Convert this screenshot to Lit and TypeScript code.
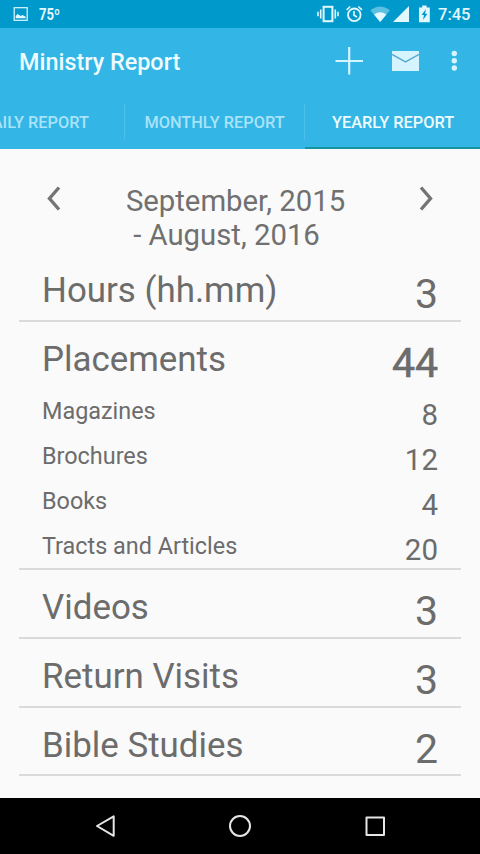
import { LitElement, html, css, svg } from "lit";
import { customElement } from "lit/decorators.js";

interface Section {
  label: string;
  value: string;
  strong?: boolean;
  items?: [string, string][];
}

const SECTIONS: Section[] = [
  { label: "Hours (hh.mm)", value: "3" },
  {
    label: "Placements",
    value: "44",
    strong: true,
    items: [
      ["Magazines", "8"],
      ["Brochures", "12"],
      ["Books", "4"],
      ["Tracts and Articles", "20"],
    ],
  },
  { label: "Videos", value: "3" },
  { label: "Return Visits", value: "3" },
  { label: "Bible Studies", value: "2" },
];

@customElement("status-bar")
export class StatusBar extends LitElement {
  static styles = css`
    :host {
      display: flex;
      align-items: center;
      height: 28px;
      background: #0099cb;
      color: #e2f8ff;
      font-weight: 500;
    }
    .photo { width: 16px; height: 16px; margin-left: 13px; }
    .temp {
      margin-left: 10px;
      font: 700 16px/28px Roboto, sans-serif;
      transform: scaleX(0.82);
      transform-origin: left;
      padding-top: 2px;
    }
    .icons { width: 122px; height: 28px; margin-left: auto; }
    .clock { width: 42px; font-size: 16.5px; line-height: 30px; padding-top: 1px; }
  `;
  render() {
    return html`
      <svg class="photo" viewBox="0 0 16 16">
        <rect x="1.2" y="1.7" width="13" height="12.6" fill="none" stroke="currentColor" stroke-width="1.2" />
        <path d="M2.7 12.3V10l2-2 3 2 1.8-1 3.2 1.8v1.5z" fill="currentColor" />
      </svg>
      <span class="temp">75º</span>
      <svg class="icons" viewBox="316 0 122 28">
        <g fill="none" stroke="currentColor">
          <rect x="323.6" y="6.8" width="8.8" height="14.4" stroke-width="2" />
          <path d="M320.7 9.5v9M318 11.7v4.6M335.3 9.5v9M338 11.7v4.6" stroke-width="1.6" />
          <circle cx="354.3" cy="14.8" r="6.3" stroke-width="1.8" />
          <path d="M354 11v4.2l3 1.8M346.6 9.8l3.7-3.3M358.3 6.500l3.700 3.300" stroke-width="1.600" />
        </g>
        <path d="M370.300 10.200Q380.200 2.600 390 10.200L380.200 22z" fill="currentColor" opacity=".4" />
        <path d="M374 14.500Q380.200 9.800 386.400 14.500L380.200 22z" fill="currentColor" />
        <path d="M409 6v16h-16z" fill="currentColor" />
        <path d="M419 7.4h3.2V5.6h4.4v1.8h3.2V22.2H419z" fill="currentColor" />
        <path d="M426 9l-4.500 6h2.500l-1 5 4.500-6.300h-2.500z" fill="#0099cb" />
      </svg>
      <span class="clock">7:45</span>
    `;
  }
}

@customElement("action-bar")
export class ActionBar extends LitElement {
  static styles = css`
    :host {
      display: flex;
      align-items: center;
      height: 67px;
      padding-left: 19px;
      color: #effcff;
    }
    .title { flex: 1; font-size: 23.4px; font-weight: 500; line-height: 67px; padding-top: 1px; white-space: nowrap; }
    .actions { width: 150px; height: 67px; color: #d6f4ff; }
  `;
  render() {
    return html`
      <span class="title">Ministry Report</span>
      <svg class="actions" viewBox="330 28 150 67">
        <path d="M335.5 61h27.5M349.2 47v27.5" stroke="currentColor" stroke-width="2.2" />
        <rect x="392" y="51" width="27" height="20" fill="currentColor" />
        <path d="M392 54.3l13.5 7.7 13.5-7.7" fill="none" stroke="#58acce" stroke-width="1.5" />
        <g fill="currentColor">
          <circle cx="454.3" cy="53.5" r="2.7" />
          <circle cx="454.3" cy="60.8" r="2.7" />
          <circle cx="454.3" cy="68" r="2.7" />
        </g>
      </svg>
    `;
  }
}

@customElement("tab-strip")
export class TabStrip extends LitElement {
  static styles = css`
    :host {
      display: flex;
      height: 54px;
      overflow: hidden;
      font-size: 16.35px;
      font-weight: 500;
      line-height: 55px;
      color: #a9e3fa;
      white-space: nowrap;
    }
    .tab { box-sizing: border-box; height: 54px; flex: none; }
    .daily { width: 124px; display: flex; justify-content: flex-end; padding-right: 35px; }
    .monthly { width: 179px; text-align: center; }
    .yearly { width: 175px; padding-left: 27px; color: #effcff; border-bottom: 2px solid #1593a0; }
    .rule { width: 1px; height: 36px; margin-top: 9px; background: #4cc0ea; flex: none; }
  `;
  render() {
    return html`
      <span class="tab daily">DAILY REPORT</span>
      <i class="rule"></i>
      <span class="tab monthly">MONTHLY REPORT</span>
      <i class="rule"></i>
      <span class="tab yearly">YEARLY REPORT</span>
    `;
  }
}

@customElement("period-picker")
export class PeriodPicker extends LitElement {
  static styles = css`
    :host {
      display: flex;
      justify-content: space-between;
      height: 104px;
      padding: 0 46px;
      color: #707070;
    }
    .arrow { width: 16px; height: 28px; margin-top: 35px; }
    .range { text-align: center; font-size: 29.3px; line-height: 34.5px; margin: 34.5px 9px 0 0; white-space: pre; }
    .end { display: block; padding-right: 18px; }
  `;
  render() {
    const arrow = (d: string) => html`<svg class="arrow" viewBox="0 0 16 28">
      ${svg`<path d=${d} fill="none" stroke="#747474" stroke-width="3.4" />`}
    </svg>`;
    return html`
      ${arrow("M13 3.5L3.5 14.5L13 25.5")}
      <div class="range">September, 2015<span class="end">- August, 2016</span></div>
      ${arrow("M3 3.5L12.5 14.5L3 25.5")}
    `;
  }
}

@customElement("report-section")
export class ReportSection extends LitElement {
  static properties = { section: { attribute: false } };
  declare section: Section;
  static styles = css`
    :host {
      display: block;
      box-sizing: border-box;
      min-height: 68.7px;
      margin: 0 19px;
      padding: 18px 23px 0;
      border-bottom: 2px solid #dadada;
      color: #6c6c6c;
    }
    .row { display: flex; justify-content: space-between; white-space: nowrap; }
    .label { font-size: 34.9px; line-height: 40px; }
    .value { font-size: 41px; line-height: 40px; margin-top: 3px; }
    .strong { -webkit-text-stroke: 0.6px currentColor; }
    .items { padding-top: 6.5px; }
    .item { height: 45.1px; }
    .item:last-child { height: 43.7px; }
    .item .label { font-size: 23.4px; line-height: 45px; }
    .item .value { font-size: 29.5px; line-height: 45px; margin-top: 4px; }
  `;
  render() {
    const { label, value, strong, items } = this.section;
    return html`
      <div class="row">
        <span class="label">${label}</span>
        <span class="value ${strong ? "strong" : ""}">${value}</span>
      </div>
      ${items
        ? html`<div class="items">
            ${items.map(
              ([name, count]) => html`<div class="row item">
                <span class="label">${name}</span><span class="value">${count}</span>
              </div>`
            )}
          </div>`
        : ""}
    `;
  }
}

@customElement("nav-bar")
export class NavBar extends LitElement {
  static styles = css`
    :host { display: block; height: 56px; background: #000; }
    svg { display: block; }
  `;
  render() {
    return html`<svg width="480" height="56" viewBox="0 798 480 56" fill="none" stroke="#e6e6e6" stroke-width="2" stroke-linejoin="round">
      <path d="M97 826l16.7-9.7v19.5z" />
      <circle cx="240" cy="826" r="10" />
      <rect x="366.5" y="817.5" width="17.5" height="17.5" />
    </svg>`;
  }
}

@customElement("app-root")
export class AppRoot extends LitElement {
  static styles = css`
    :host {
      display: flex;
      flex-direction: column;
      width: 480px;
      height: 854px;
      overflow: hidden;
      background: #fafafa;
      font-family: Roboto, sans-serif;
    }
    .header { background: #33b5e5; }
    .report { flex: 1; min-height: 0; }
  `;
  render() {
    return html`
      <status-bar></status-bar>
      <div class="header">
        <action-bar></action-bar>
        <tab-strip></tab-strip>
      </div>
      <div class="report">
        <period-picker></period-picker>
        ${SECTIONS.map((s) => html`<report-section .section=${s}></report-section>`)}
      </div>
      <nav-bar></nav-bar>
    `;
  }
}
